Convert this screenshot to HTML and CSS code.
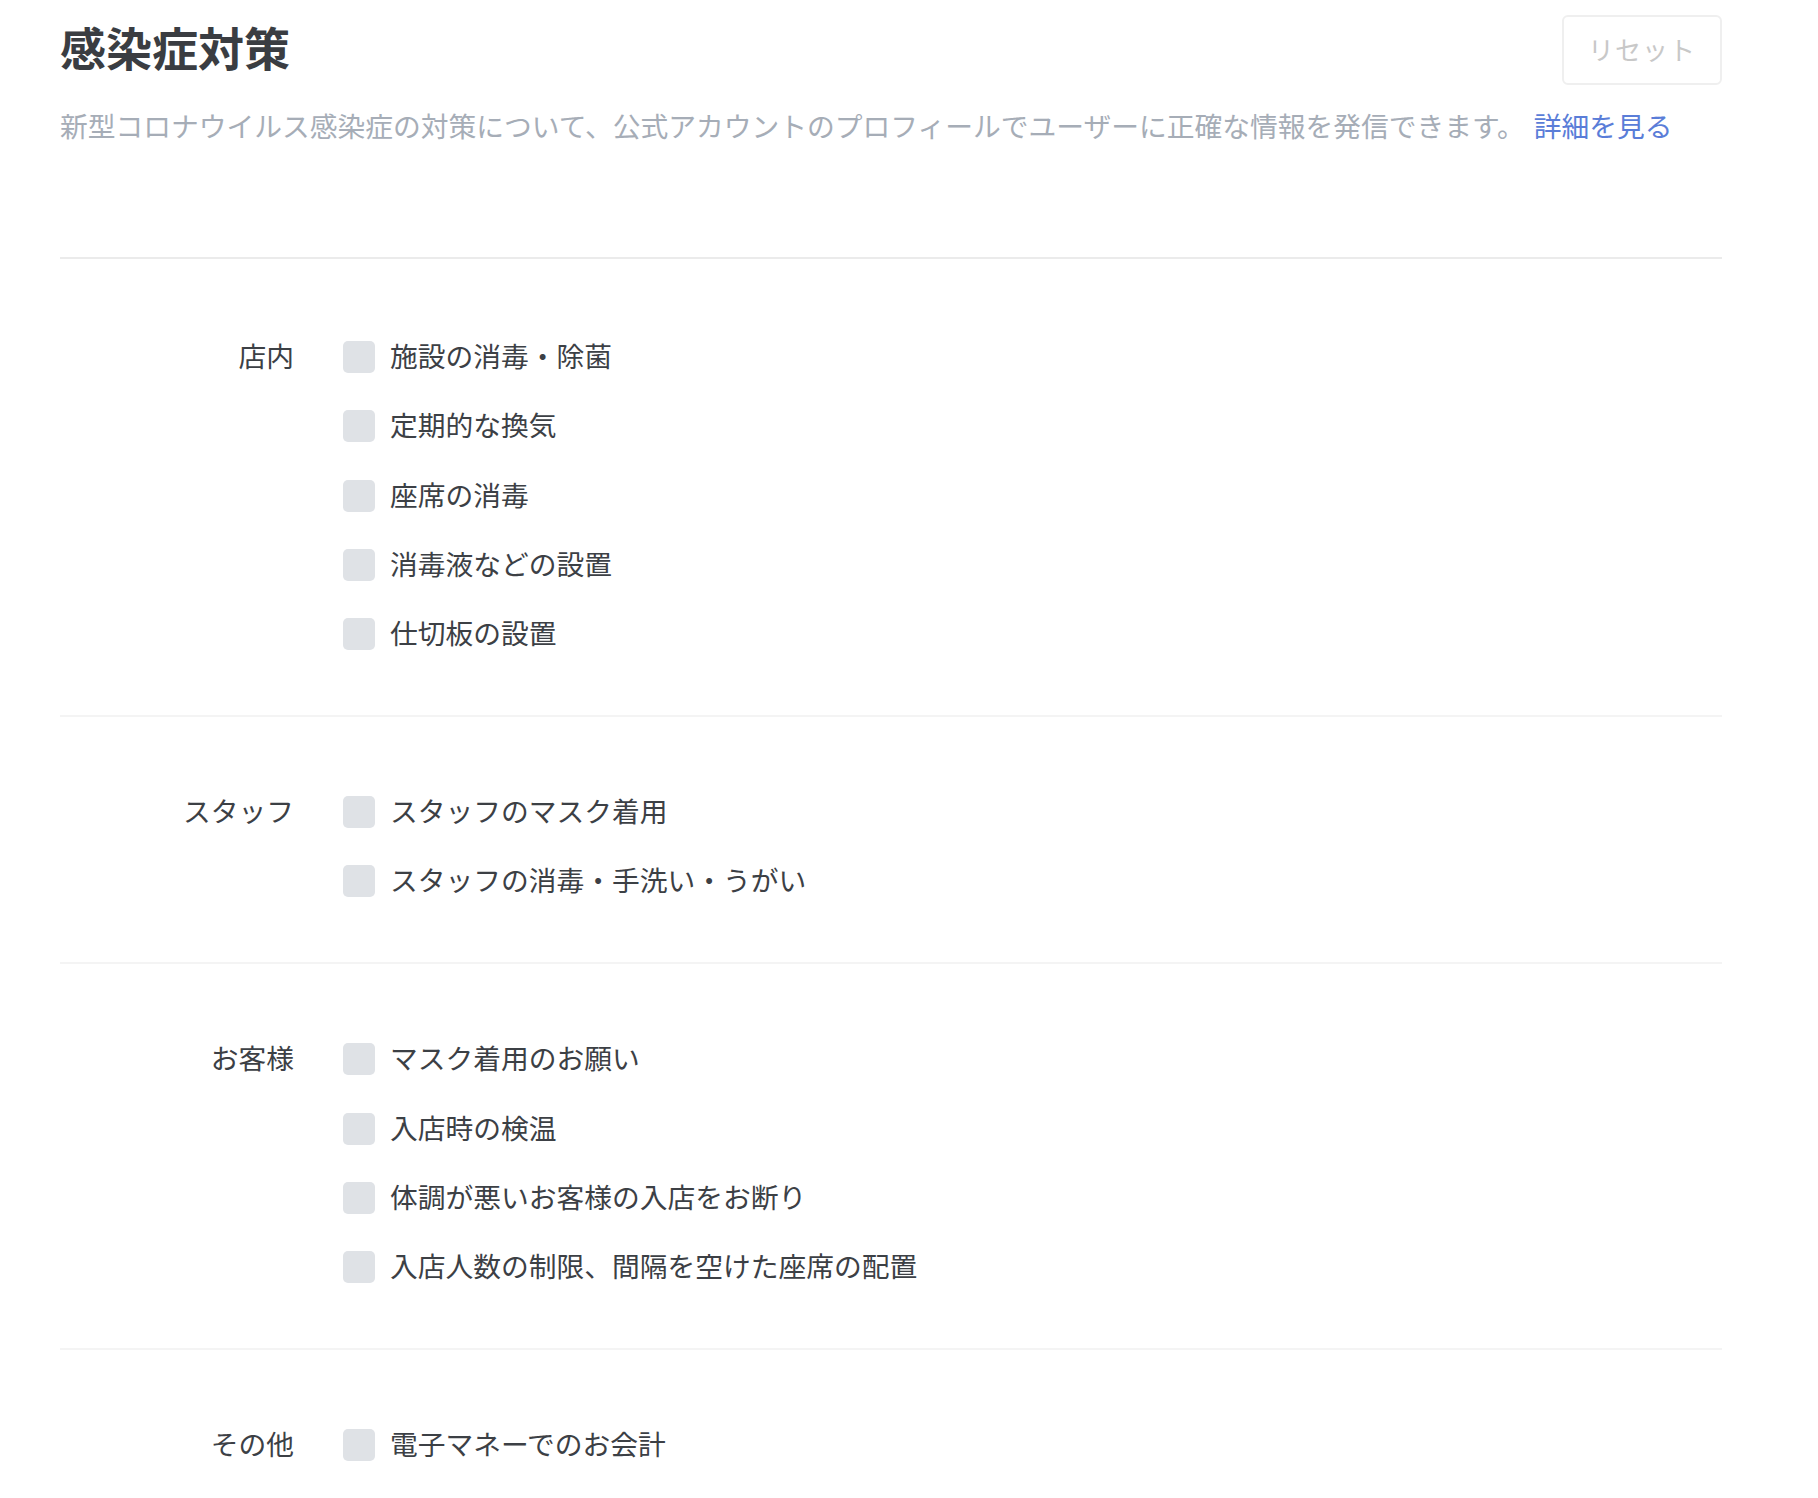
FILE: index.html
```html
<!DOCTYPE html>
<html lang="ja">
<head>
<meta charset="utf-8">
<title>感染症対策</title>
<link rel="stylesheet" href="styles.css">
</head>
<body>
<div class="page">
  <header class="header">
    <div class="title-row">
      <h1 class="title">感染症対策</h1>
      <button class="reset" type="button">リセット</button>
    </div>
    <p class="desc">新型コロナウイルス感染症の対策について、公式アカウントのプロフィールでユーザーに正確な情報を発信できます。<a class="link" href="#">詳細を見る</a></p>
  </header>

  <section class="group first">
    <div class="label">店内</div>
    <ul class="items">
      <li class="item"><span class="box"></span><span class="text">施設の消毒・除菌</span></li>
      <li class="item"><span class="box"></span><span class="text">定期的な換気</span></li>
      <li class="item"><span class="box"></span><span class="text">座席の消毒</span></li>
      <li class="item"><span class="box"></span><span class="text">消毒液などの設置</span></li>
      <li class="item"><span class="box"></span><span class="text">仕切板の設置</span></li>
    </ul>
  </section>

  <section class="group">
    <div class="label">スタッフ</div>
    <ul class="items">
      <li class="item"><span class="box"></span><span class="text">スタッフのマスク着用</span></li>
      <li class="item"><span class="box"></span><span class="text">スタッフの消毒・手洗い・うがい</span></li>
    </ul>
  </section>

  <section class="group">
    <div class="label">お客様</div>
    <ul class="items">
      <li class="item"><span class="box"></span><span class="text">マスク着用のお願い</span></li>
      <li class="item"><span class="box"></span><span class="text">入店時の検温</span></li>
      <li class="item"><span class="box"></span><span class="text">体調が悪いお客様の入店をお断り</span></li>
      <li class="item"><span class="box"></span><span class="text">入店人数の制限、間隔を空けた座席の配置</span></li>
    </ul>
  </section>

  <section class="group last">
    <div class="label">その他</div>
    <ul class="items">
      <li class="item"><span class="box"></span><span class="text">電子マネーでのお会計</span></li>
    </ul>
  </section>
</div>
</body>
</html>
```

FILE: styles.css
```css
html, body {
  margin: 0;
  padding: 0;
  background: #ffffff;
}

body {
  font-family: "Noto Sans CJK JP", "Noto Sans", sans-serif;
  color: #3c4045;
}

.page {
  padding: 0 96px 0 60px;
}

.header {
  padding-top: 15px;
  padding-bottom: 112px;
  border-bottom: 2px solid #ebebeb;
}

.title-row {
  display: flex;
  justify-content: space-between;
  align-items: flex-start;
  height: 70px;
}

.title {
  margin: 0;
  font-size: 46px;
  line-height: 63px;
  font-weight: 700;
  color: #3a3d42;
}

.reset {
  width: 160px;
  height: 70px;
  border: 2px solid #efefef;
  border-radius: 6px;
  background: #ffffff;
  font-family: "Noto Sans CJK JP", "Noto Sans", sans-serif;
  font-size: 26px;
  color: #c8c8c8;
  letter-spacing: 1px;
  padding: 0 0 4px;
}

.desc {
  margin: 20px 0 0;
  font-size: 27.75px;
  line-height: 40px;
  color: #a6adb7;
  white-space: nowrap;
}

.link {
  margin-left: 9px;
  color: #5a7dd8;
  text-decoration: none;
}

.group {
  display: grid;
  grid-template-columns: 234px 1fr;
  column-gap: 49px;
  padding: 73px 0 63px;
  border-bottom: 2px solid #f4f4f4;
}

.group.first {
  padding-top: 76px;
}

.group.last {
  border-bottom: none;
}

.label {
  text-align: right;
  font-size: 27.75px;
  line-height: 40px;
  color: #3c4045;
}

.items {
  list-style: none;
  margin: 0;
  padding: 0;
  display: flex;
  flex-direction: column;
  gap: 29.3px;
}

.item {
  display: flex;
  align-items: center;
  gap: 15px;
  height: 40px;
}

.box {
  flex: none;
  width: 32px;
  height: 32px;
  margin-top: 4px;
  border-radius: 5px;
  background: #dfe2e6;
}

.text {
  font-size: 27.75px;
  line-height: 40px;
  color: #3c4045;
}
```
